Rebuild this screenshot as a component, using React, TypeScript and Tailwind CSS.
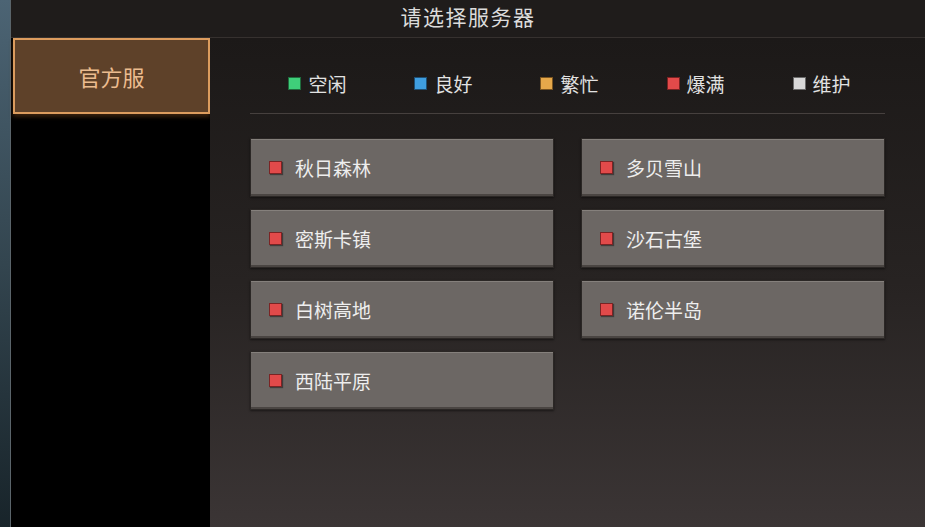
const legend = [
  { label: "空闲", color: "bg-[#3fcf7a]", edge: "border-[#1f6b3d]" },
  { label: "良好", color: "bg-[#3f9ee0]", edge: "border-[#1f4f73]" },
  { label: "繁忙", color: "bg-[#e6a84a]", edge: "border-[#7a5420]" },
  { label: "爆满", color: "bg-[#e24a4a]", edge: "border-[#7a2222]" },
  { label: "维护", color: "bg-[#d8d8d8]", edge: "border-[#6a6a6a]" },
];

const servers = [
  "秋日森林",
  "多贝雪山",
  "密斯卡镇",
  "沙石古堡",
  "白树高地",
  "诺伦半岛",
  "西陆平原",
];

function ServerCard({ name }: { name: string }) {
  return (
    <div className="flex h-[59px] items-center border border-[#2b2725] bg-[#6c6764] pl-[18px] shadow-[inset_0_1px_0_#85807c,inset_0_-2px_0_#4a4542,0_1px_2px_rgba(0,0,0,0.5)]">
      <span className="h-[13px] w-[13px] border border-[#7a2424] bg-[#e14a4a] shadow-[1px_1px_1px_rgba(0,0,0,0.4)]" />
      <span className="ml-[13px] text-[19px] leading-none text-[#eeeeee]">{name}</span>
    </div>
  );
}

export default function App() {
  return (
    <div
      className="flex h-[527px] w-[925px] overflow-hidden bg-black"
      style={{ fontFamily: '"Noto Sans CJK SC", "Noto Sans", sans-serif' }}
    >
      <div className="w-[11px] shrink-0 border-r border-[#5a646a] bg-gradient-to-b from-[#4c6474] via-[#33454f] to-[#18242a]" />
      <div className="flex flex-1 flex-col">
        <div className="flex h-[38px] shrink-0 items-center justify-center border-b border-[#36312f] bg-[#1f1c1b] pb-[5px]">
          <span className="text-[21px] leading-none tracking-[1.5px] text-[#dcdcdc]">请选择服务器</span>
        </div>
        <div className="flex flex-1">
          <div className="w-[199px] shrink-0 bg-black pl-[2px]">
            <div className="flex h-[76px] items-center justify-center border-2 border-[#dc9c5e] bg-[#5e4129] shadow-[0_3px_4px_rgba(120,70,30,0.45)]">
              <span className="text-[22px] leading-none text-[#ecbc90]">官方服</span>
            </div>
          </div>
          <div className="flex flex-1 flex-col bg-gradient-to-b from-[#1c1918] via-[#272322] to-[#3b3535] px-[40px]">
            <div className="flex h-[76px] items-center justify-center gap-[68px] border-b border-[#46403e] pl-[4px] pt-[15px]">
              {legend.map((l) => (
                <div key={l.label} className="flex items-center">
                  <span className={`h-[13px] w-[13px] border ${l.edge} ${l.color}`} />
                  <span className="ml-[7px] text-[19px] leading-none text-[#e2e2e2]">{l.label}</span>
                </div>
              ))}
            </div>
            <div className="mt-[24px] grid grid-cols-2 gap-x-[27px] gap-y-[12px]">
              {servers.map((s) => (
                <ServerCard key={s} name={s} />
              ))}
            </div>
          </div>
        </div>
      </div>
    </div>
  );
}
